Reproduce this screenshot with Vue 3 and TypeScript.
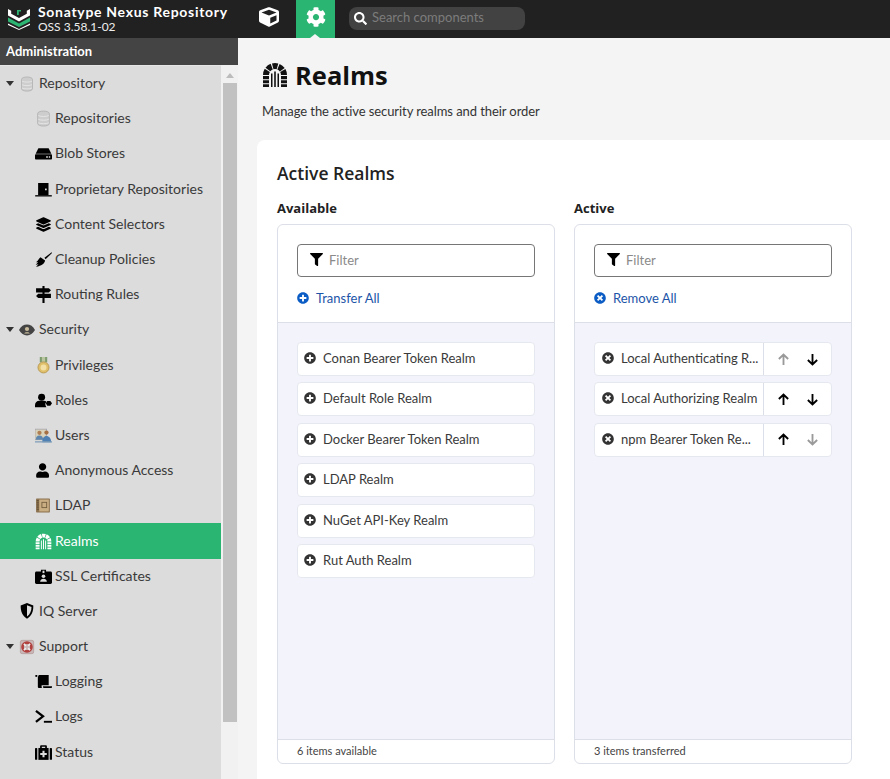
<template>
  <div class="page">
    <header class="topbar">
      <div class="brand">
        <svg class="logo" viewBox="0 0 24 22">
          <path d="M1 1v6.500l11 6 11-6V1l-3.200 1.800v3l-7.800 4.300-7.800-4.300v-3z" fill="#fff" />
          <path d="M1 9.500v4l11 5.500 11-5.500v-4l-11 6z" fill="#2db573" />
          <path d="M1 15.500v1.500l11 5 11-5v-1.500l-11 5.500z" fill="#fff" />
          <path d="M10 2h4v1.500h-2.200V7H10z" fill="#2db573" />
        </svg>
        <div class="brand-text">
          <div class="brand-name">Sonatype Nexus Repository</div>
          <div class="brand-version">OSS 3.58.1-02</div>
        </div>
      </div>
      <button class="mode">
        <svg class="mode-icon" viewBox="0 0 512 512"><path :d="icons.cube" fill="#fff" /></svg>
      </button>
      <button class="mode mode-active">
        <svg class="mode-icon" viewBox="0 0 512 512"><path :d="icons.cog" fill="#fff" /></svg>
        <span class="mode-caret"></span>
      </button>
      <div class="search">
        <svg class="search-icon" viewBox="0 0 512 512"><path :d="icons.search" fill="#fff" /></svg>
        <span class="search-text">Search components</span>
      </div>
    </header>

    <div class="body">
      <aside class="side">
        <div class="side-title">Administration</div>
        <div class="side-main">
          <nav class="tree">
            <div
              v-for="row in rows"
              :key="row.label"
              class="row"
              :class="{ child: row.level === 2, selected: row.label === 'Realms' }"
            >
              <span v-if="row.open" class="twist"></span>
              <span class="row-icon" v-html="row.svg"></span>
              <span class="row-label">{{ row.label }}</span>
            </div>
          </nav>
          <div class="scroll">
            <span class="scroll-up"></span>
            <div class="scroll-thumb"></div>
          </div>
        </div>
      </aside>

      <main class="main">
        <div class="page-head">
          <h1 class="page-title">
            <svg class="page-icon" viewBox="0 0 26 26" v-html="realmSvg"></svg>
            Realms
          </h1>
          <p class="page-sub">Manage the active security realms and their order</p>
        </div>

        <section class="card">
          <h2 class="card-title">Active Realms</h2>
          <div class="columns">
            <div class="column">
              <div class="col-label">Available</div>
              <div class="box">
                <div class="box-top">
                  <div class="filter">
                    <svg class="filter-icon" viewBox="0 0 512 512"><path :d="icons.filter" fill="#000" /></svg>
                    <span>Filter</span>
                  </div>
                  <div class="link">
                    <svg class="link-icon" viewBox="0 0 512 512"><path :d="icons.plus" fill="#0b5cc4" /></svg>
                    Transfer All
                  </div>
                </div>
                <div class="list">
                  <div v-for="item in available" :key="item" class="item">
                    <svg class="item-icon" viewBox="0 0 512 512"><path :d="icons.plus" fill="#333" /></svg>
                    <span class="item-text">{{ item }}</span>
                  </div>
                </div>
                <div class="box-foot">6 items available</div>
              </div>
            </div>

            <div class="column">
              <div class="col-label">Active</div>
              <div class="box">
                <div class="box-top">
                  <div class="filter">
                    <svg class="filter-icon" viewBox="0 0 512 512"><path :d="icons.filter" fill="#000" /></svg>
                    <span>Filter</span>
                  </div>
                  <div class="link">
                    <svg class="link-icon" viewBox="0 0 512 512"><path :d="icons.times" fill="#0b5cc4" /></svg>
                    Remove All
                  </div>
                </div>
                <div class="list">
                  <div v-for="item in active" :key="item.name" class="item item-active">
                    <svg class="item-icon" viewBox="0 0 512 512"><path :d="icons.times" fill="#333" /></svg>
                    <span class="item-text">{{ item.name }}</span>
                    <div class="arrows">
                      <svg class="arrow" :class="{ off: !item.up }" viewBox="0 0 14 14">
                        <path d="M7 13V2M2 6.500 7 1.600l5 4.900" />
                      </svg>
                      <svg class="arrow" :class="{ off: !item.down }" viewBox="0 0 14 14">
                        <path d="M7 1v11M2 7.500l5 4.900 5-4.900" />
                      </svg>
                    </div>
                  </div>
                </div>
                <div class="box-foot">3 items transferred</div>
              </div>
            </div>
          </div>
        </section>
      </main>
    </div>
  </div>
</template>

<script setup lang="ts">
const icons = {
  cube: 'M239.1 6.3l-208 78c-18.7 7-31.1 25-31.1 45v225.1c0 18.2 10.3 34.8 26.5 42.9l208 104c13.5 6.8 29.4 6.8 42.9 0l208-104c16.3-8.1 26.5-24.8 26.5-42.9V129.3c0-20-12.4-37.9-31.1-44.9l-208-78C262 2.2 250 2.2 239.1 6.3zM256 68.4l192 72v1.1l-192 78-192-78v-1.1l192-72zm32 356V275.5l160-65v133.9l-160 80z',
  cog: 'M487.4 315.7l-42.6-24.6c4.3-23.2 4.3-47 0-70.2l42.6-24.6c4.9-2.8 7.1-8.6 5.5-14-11.1-35.6-30-67.8-54.7-94.6-3.8-4.1-10-5.1-14.8-2.3L380.8 110c-17.9-15.4-38.5-27.3-60.8-35.1V25.8c0-5.6-3.9-10.5-9.4-11.7-36.7-8.2-74.3-7.8-109.2 0-5.5 1.2-9.4 6.1-9.4 11.7V75c-22.2 7.9-42.8 19.8-60.8 35.1L88.7 85.5c-4.9-2.8-11-1.9-14.8 2.3-24.7 26.7-43.6 58.9-54.7 94.6-1.7 5.4.6 11.2 5.5 14L67.3 221c-4.3 23.2-4.3 47 0 70.2l-42.6 24.6c-4.9 2.8-7.1 8.6-5.5 14 11.1 35.6 30 67.8 54.7 94.6 3.8 4.1 10 5.1 14.8 2.3l42.6-24.6c17.9 15.4 38.5 27.3 60.8 35.1v49.2c0 5.6 3.9 10.5 9.4 11.7 36.7 8.2 74.3 7.8 109.2 0 5.5-1.2 9.4-6.1 9.4-11.7v-49.2c22.2-7.9 42.8-19.8 60.8-35.1l42.6 24.6c4.9 2.8 11 1.9 14.8-2.3 24.7-26.7 43.6-58.9 54.7-94.6 1.5-5.5-.7-11.3-5.6-14.1zM256 336c-44.1 0-80-35.9-80-80s35.9-80 80-80 80 35.9 80 80-35.9 80-80 80z',
  search: 'M505 442.7L405.3 343c-4.5-4.5-10.6-7-17-7H372c27.6-35.3 44-79.7 44-128C416 93.1 322.9 0 208 0S0 93.1 0 208s93.1 208 208 208c48.3 0 92.7-16.4 128-44v16.3c0 6.4 2.5 12.5 7 17l99.7 99.7c9.4 9.4 24.6 9.4 33.9 0l28.3-28.3c9.4-9.4 9.4-24.6.1-34zM208 336c-70.7 0-128-57.2-128-128 0-70.7 57.2-128 128-128 70.7 0 128 57.2 128 128 0 70.7-57.2 128-128 128z',
  filter: 'M487.976 0H24.028C2.71 0-8.047 25.866 7.058 40.971L192 225.941V432c0 7.831 3.821 15.17 10.237 19.662l80 55.98C298.02 518.69 320 507.493 320 487.98V225.941l184.947-184.97C520.021 25.896 509.338 0 487.976 0z',
  plus: 'M256 8C119 8 8 119 8 256s111 248 248 248 248-111 248-248S393 8 256 8zm144 276c0 6.6-5.4 12-12 12h-92v92c0 6.6-5.4 12-12 12h-56c-6.6 0-12-5.4-12-12v-92h-92c-6.6 0-12-5.4-12-12v-56c0-6.6 5.4-12 12-12h92v-92c0-6.6 5.4-12 12-12h56c6.6 0 12 5.4 12 12v92h92c6.6 0 12 5.4 12 12v56z',
  times: 'M256 8C119 8 8 119 8 256s111 248 248 248 248-111 248-248S393 8 256 8zm121.6 313.1c4.7 4.7 4.7 12.3 0 17L338 377.6c-4.7 4.7-12.3 4.7-17 0L256 312l-65.1 65.6c-4.7 4.7-12.3 4.7-17 0L134.4 338c-4.7-4.7-4.7-12.3 0-17l65.6-65-65.6-65.1c-4.7-4.7-4.7-12.3 0-17l39.6-39.6c4.7-4.7 12.3-4.7 17 0l65 65.7 65.1-65.6c4.7-4.7 12.3-4.7 17 0l39.6 39.6c4.7 4.7 4.7 12.3 0 17L312 256l65.6 65.1z',
  layers: 'M12.41 148.02l232.94 105.67c6.8 3.09 14.49 3.09 21.29 0l232.94-105.67c16.55-7.51 16.55-32.52 0-40.03L266.65 2.31a25.607 25.607 0 0 0-21.29 0L12.41 107.98c-16.55 7.51-16.55 32.53 0 40.04zm487.18 88.28l-58.09-26.33-161.64 73.27c-7.56 3.43-15.59 5.17-23.86 5.17s-16.29-1.74-23.86-5.17L70.51 209.97l-58.1 26.33c-16.55 7.5-16.55 32.5 0 40l232.94 105.59c6.8 3.08 14.49 3.08 21.29 0L499.59 276.3c16.55-7.5 16.55-32.5 0-40zm0 127.8l-57.87-26.23-161.86 73.37c-7.56 3.43-15.59 5.17-23.86 5.17s-16.29-1.74-23.86-5.17L70.29 337.87 12.41 364.1c-16.55 7.5-16.55 32.5 0 40l232.94 105.59c6.8 3.08 14.49 3.08 21.29 0L499.59 404.1c16.55-7.5 16.55-32.5 0-40z',
  user: 'M224 256c70.7 0 128-57.3 128-128S294.7 0 224 0 96 57.3 96 128s57.3 128 128 128zm89.6 32h-16.7c-22.2 10.2-46.9 16-72.9 16s-50.6-5.8-72.9-16h-16.7C60.2 288 0 348.2 0 422.4V464c0 26.5 21.5 48 48 48h352c26.5 0 48-21.5 48-48v-41.6c0-74.2-60.2-134.4-134.4-134.4z',
}

// stone arch with a barred gate, same drawing in the sidebar and the page title
const realmParts = (fill: string) => `
  <path d="M4 13A9 9 0 0 1 22 13" fill="none" stroke="${fill}" stroke-width="6" stroke-dasharray="4.86 1"/>
  <g fill="${fill}">
    <path d="M1 14h6v3.200H1zM19 14h6v3.200h-6zM1 18.200h6v3H1zM19 18.200h6v3h-6zM1 22.200h6V25H1zM19 22.200h6V25h-6z"/>
    <path d="M9 11.500h1.500V25H9zM12.200 9.500h1.600V25h-1.600zM15.500 11.500H17V25h-1.500z"/>
  </g>`

const realmSvg = realmParts('#111')
const wrap = (box: string, inner: string) => `<svg viewBox="${box}" width="100%" height="100%">${inner}</svg>`
const black = (d: string, box = '0 0 512 512') => wrap(box, `<path d="${d}" fill="#000"/>`)

const database = wrap('0 0 16 16', `
  <path d="M2.500 3.400c0-1.500 2.600-2.400 5.500-2.400s5.500.9 5.500 2.400v9.400c0 1.400-2.600 2.300-5.500 2.300s-5.500-.9-5.500-2.300z" fill="#cdcdcd" stroke="#b0b0b0" stroke-width=".8"/>
  <path d="M3 5.200c1.800 1.200 8.200 1.200 10 0M3 8.700c1.800 1.200 8.200 1.200 10 0M3 12c1.800 1.200 8.200 1.200 10 0" fill="none" stroke="#e8e8e8" stroke-width=".8"/>`)

const blob = wrap('0 0 16 14', `
  <path d="M3.200 2h9.600l2.600 5.200H.6z" fill="#000"/>
  <rect x="0" y="7.800" width="16" height="4.800" rx=".8" fill="#000"/>
  <path d="M10.500 9.600h1.600v1.300h-1.600zM13 9.600h1.300v1.300H13z" fill="#ddd"/>`)

const door = wrap('0 0 18 16', `
  <path d="M3.300 1h11v13.200h-11z" fill="#000"/>
  <path d="M.2 14h17.600v1.400H.2z" fill="#000"/>
  <rect x="10.600" y="7" width="1.800" height="1.800" fill="#ddd"/>`)

const broom = wrap('0 0 18 16', `
  <path d="M17.600.4 10 6.200l1.200 1.600 6.800-6.600z" fill="#000"/>
  <path d="M5.800 5.600 10.700 9c-.8 3.400-3.600 5.600-9.600 6.700l2.600-2.800-3 .6 2.600-2.700-2.200.2C3.500 9 4.200 7 5.800 5.600z" fill="#000"/>`)

const signs = wrap('0 0 16 16', `
  <path d="M7 0h2v16H7z" fill="#000"/>
  <path d="M1 2h12l2 2-2 2H1zM15 7.400H3l-2 2 2 2h12z" fill="#000"/>`)

const eye = wrap('0 0 16 14', `
  <path d="M0 7c2-3.600 4.800-5.400 8-5.400S14 3.400 16 7c-2 3.600-4.800 5.400-8 5.400S2 10.600 0 7z" fill="#444"/>
  <circle cx="8" cy="6" r="2.100" fill="#c9bd9d"/>
  <path d="M5.200 10.600c.6-1.700 5-1.700 5.600 0z" fill="#c9bd9d"/>`)

const medal = wrap('-2 0 16 16', `
  <path d="M2.500 0h7v5h-7z" fill="#7e9c6e"/>
  <path d="M4.500 0h3v5h-3z" fill="#b9c6a0"/>
  <circle cx="6" cy="9.800" r="5.200" fill="#e0bf6a" stroke="#b3934c" stroke-width=".8"/>
  <circle cx="6" cy="9.800" r="2.800" fill="#f2e0a6"/>`)

const roles = wrap('0 0 18 15', `
  <circle cx="7" cy="4" r="3.700" fill="#000"/>
  <path d="M0 14.600v-2.200c0-2.800 2.200-4.600 4.400-4.600h5c1.200 0 2.200.4 3 1.200l-1.400 1.300v2l1 2.300z" fill="#000"/>
  <path d="M13 8h3.200l1.800 2.500-1.800 2.600H13l-1.600-2.600z" fill="#000"/>`)

const users = wrap('0 -1 16 16', `
  <rect x="0" y="1" width="11" height="10" fill="#d8d2bb" stroke="#99a" stroke-width=".6"/>
  <circle cx="4.200" cy="4.500" r="2" fill="#b07f53"/>
  <path d="M.8 11c0-3 1.300-4 3.400-4s3.400 1 3.400 4z" fill="#5f86ad"/>
  <circle cx="10.800" cy="4.200" r="2" fill="#a66f44"/>
  <path d="M6.800 13.400c0-4 1.700-6 4-6s4.400 2 4.400 6z" fill="#4f80b3"/>
  <path d="M0 12.400h16v1.200H0z" fill="#7f9db8"/>`)

const book = wrap('-1 -1 16 16', `
  <rect x="0" y=".4" width="13" height="13.200" rx=".6" fill="#8c7350"/>
  <rect x="3" y="1.400" width="9" height="11.200" fill="#c9ae84"/>
  <path d="M.6 2.500h2M.6 4.500h2M.6 6.500h2M.6 8.500h2M.6 10.500h2" stroke="#4d3e28" stroke-width=".7"/>
  <rect x="5.500" y="4" width="4.500" height="5" fill="none" stroke="#6f5a3b" stroke-width=".8"/>`)

const badge = wrap('0 0 16 14', `
  <path d="M1.400 2.400H5.600V.6h4.800v1.800h4.200c.8 0 1.400.6 1.400 1.400v8.800c0 .8-.6 1.400-1.400 1.400H1.400C.6 14 0 13.400 0 12.600V3.800c0-.8.6-1.400 1.400-1.400z" fill="#000"/>
  <path d="M7.100 1.500h1.800v2.300H7.100z" fill="#ddd"/>
  <circle cx="8" cy="6.800" r="1.700" fill="#ddd"/>
  <path d="M4.800 12c.2-2 1.400-2.900 3.200-2.900s3 .9 3.200 2.900z" fill="#ddd"/>`)

const shield = wrap('0 0 14 16', `
  <path d="M7 0 .7 2.600c-.2 5.600 1.600 10.500 6.300 13.200 4.700-2.700 6.500-7.600 6.300-13.200z" fill="#000"/>
  <path d="M7 2.300v11.200c3-2 4.400-5.400 4.500-9.400z" fill="#ddd"/>`)

const lifebuoy = wrap('-1 -1 18 18', `
  <rect x=".5" y=".5" width="15" height="15" rx="2" fill="#c9b6b6" stroke="#a88" stroke-width=".6"/>
  <circle cx="8" cy="8" r="5" fill="none" stroke="#b0413f" stroke-width="3"/>
  <path d="M4.600 4.600l2 2M11.400 4.600l-2 2M4.600 11.400l2-2M11.400 11.400l-2-2" stroke="#eee" stroke-width="2"/>`)

const scroll = wrap('0 0 18 15', `
  <path d="M4 .5h10.500v11H7v1.800c0 .6.600 1.200 1.200 1.200H4.400C3.600 14.500 3 13.800 3 13V3z" fill="#000"/>
  <path d="M.4.600h2v2h-2z" fill="#000"/>
  <path d="M8.400 12.600H18v.8c0 .6-.5 1.100-1.100 1.100H9c-.4-.5-.6-1.200-.6-1.900z" fill="#000"/>`)

const terminal = wrap('0 0 18 14', `
  <path d="M1 1 8.500 6.800 1 12.600" fill="none" stroke="#000" stroke-width="2.400"/>
  <path d="M9.400 11.600H18v2H9.400z" fill="#000"/>`)

const medkit = wrap('0 0 15 14', `
  <path d="M4.500 3V1.500C4.500.9 5 .5 5.500.5h4c.6 0 1 .4 1 1V3H9V2H6v1z" fill="#000"/>
  <rect x="0" y="3" width="2" height="10.500" rx=".6" fill="#000"/>
  <rect x="13" y="3" width="2" height="10.500" rx=".6" fill="#000"/>
  <rect x="3" y="3" width="9" height="10.500" fill="#000"/>
  <path d="M6.600 5.400h1.800v2h2v1.800h-2v2H6.600v-2h-2V7.400h2z" fill="#ddd"/>`)

interface Row {
  label: string
  level: 1 | 2
  svg: string
  open?: boolean
}

const rows: Row[] = [
  { label: 'Repository', level: 1, svg: database, open: true },
  { label: 'Repositories', level: 2, svg: database },
  { label: 'Blob Stores', level: 2, svg: blob },
  { label: 'Proprietary Repositories', level: 2, svg: door },
  { label: 'Content Selectors', level: 2, svg: black(icons.layers, '-40 -40 592 592') },
  { label: 'Cleanup Policies', level: 2, svg: broom },
  { label: 'Routing Rules', level: 2, svg: signs },
  { label: 'Security', level: 1, svg: eye, open: true },
  { label: 'Privileges', level: 2, svg: medal },
  { label: 'Roles', level: 2, svg: roles },
  { label: 'Users', level: 2, svg: users },
  { label: 'Anonymous Access', level: 2, svg: black(icons.user, '-40 -40 592 592') },
  { label: 'LDAP', level: 2, svg: book },
  { label: 'Realms', level: 2, svg: wrap('0 0 26 26', realmParts('#fff')) },
  { label: 'SSL Certificates', level: 2, svg: badge },
  { label: 'IQ Server', level: 1, svg: shield },
  { label: 'Support', level: 1, svg: lifebuoy, open: true },
  { label: 'Logging', level: 2, svg: scroll },
  { label: 'Logs', level: 2, svg: terminal },
  { label: 'Status', level: 2, svg: medkit },
]

const available = [
  'Conan Bearer Token Realm',
  'Default Role Realm',
  'Docker Bearer Token Realm',
  'LDAP Realm',
  'NuGet API-Key Realm',
  'Rut Auth Realm',
]

const active = [
  { name: 'Local Authenticating R...', up: false, down: true },
  { name: 'Local Authorizing Realm', up: true, down: true },
  { name: 'npm Bearer Token Re...', up: true, down: false },
]
</script>

<style>
html,
body {
  margin: 0;
  overflow: hidden;
}
</style>

<style scoped>
* {
  box-sizing: border-box;
}

.page {
  width: 890px;
  height: 779px;
  overflow: hidden;
  display: flex;
  flex-direction: column;
  font-family: Lato, "Noto Sans", sans-serif;
  font-size: 14px;
  color: #333;
  background: #f4f4f4;
}

.topbar {
  height: 38px;
  flex: none;
  display: flex;
  align-items: center;
  background: #212121;
}

.brand {
  width: 250px;
  flex: none;
  display: flex;
  align-items: center;
  padding-left: 7px;
  gap: 7px;
  color: #fff;
}

.logo {
  width: 24px;
  height: 22px;
}

.brand-name {
  font-size: 14px;
  font-weight: 700;
  line-height: 14px;
  margin-bottom: 1px;
  letter-spacing: 0.7px;
}

.brand-version {
  font-size: 12px;
  line-height: 13px;
  color: #eee;
}

.mode {
  width: 38px;
  height: 38px;
  padding: 0 0 4px;
  border: none;
  background: none;
  display: flex;
  align-items: center;
  justify-content: center;
  position: relative;
}

.mode-active {
  width: 39px;
  margin-left: 8px;
  background: #2bb573;
}

.mode-icon {
  width: 20px;
  height: 20px;
}

.mode-caret {
  position: absolute;
  left: 14px;
  bottom: 0;
  border: 5px solid transparent;
  border-top: 0;
  border-bottom: 4px solid #f4f4f4;
}

.search {
  width: 176px;
  height: 23px;
  margin: 0 0 2px 14px;
  border-radius: 8px;
  background: #424242;
  display: flex;
  align-items: center;
  padding-left: 5px;
  gap: 5px;
}

.search-icon {
  width: 13px;
  height: 13px;
}

.search-text {
  color: #7c7c7c;
  font-size: 13px;
  margin-bottom: 2px;
}

.body {
  flex: 1;
  display: flex;
  min-height: 0;
}

.side {
  width: 238px;
  flex: none;
  display: flex;
  flex-direction: column;
  background: #f1f1f1;
}

.side-title {
  height: 27px;
  flex: none;
  background: #444;
  color: #fff;
  font-size: 13px;
  font-weight: 700;
  line-height: 27px;
  padding-left: 6px;
}

.side-main {
  flex: 1;
  display: flex;
  min-height: 0;
}

.tree {
  width: 221px;
  background: #dcdcdc;
  flex: none;
  height: 714px;
  border-top: 1px solid #e6e6e6;
}

.row {
  height: 35.2px;
  display: flex;
  align-items: center;
  padding-left: 19px;
  position: relative;
  color: #3a3a3a;
}

.row.child {
  padding-left: 35px;
}

.row.selected {
  background: #2bb573;
  color: #fff;
}

.row-label {
  margin-bottom: 2px;
}

.twist {
  position: absolute;
  left: 6px;
  top: 15px;
  border: 4px solid transparent;
  border-top: 5px solid #333;
  border-bottom: 0;
}

.row-icon {
  width: 16px;
  height: 16px;
  margin-right: 4px;
  flex: none;
  display: flex;
  align-items: center;
  justify-content: center;
}

.row.child .row-icon {
  width: 17px;
  height: 17px;
  margin-right: 3px;
}

.scroll {
  flex: 1;
  padding-left: 2px;
  display: flex;
  flex-direction: column;
}

.scroll-up {
  width: 0;
  margin: 8px 0 0 3px;
  border: 4px solid transparent;
  border-top: 0;
  border-bottom: 5px solid #bcbcbc;
}

.scroll-thumb {
  margin-top: 5px;
  width: 14px;
  height: 639px;
  background: #c1c1c1;
}

.main {
  flex: 1;
  min-width: 0;
}

.page-head {
  height: 102px;
  padding: 21px 0 0 24px;
}

.page-title {
  margin: 0;
  display: flex;
  align-items: center;
  gap: 7px;
  font-family: "Open Sans", sans-serif;
  font-size: 25.5px;
  font-weight: 700;
  line-height: 32px;
  color: #111;
}

.page-icon {
  width: 26px;
  height: 26px;
}

.page-sub {
  margin: 10px 0 0;
  font-size: 13px;
  line-height: 20px;
  color: #333;
  letter-spacing: -0.08px;
}

.card {
  margin-left: 19px;
  height: 700px;
  background: #fff;
  border-radius: 8px 0 0 0;
  padding: 20px;
}

.card-title {
  margin: 0;
  font-family: "Open Sans", sans-serif;
  font-size: 17.5px;
  font-weight: 600;
  line-height: 26px;
  color: #222;
}

.columns {
  display: flex;
  gap: 19px;
  margin-top: 13px;
}

.column {
  width: 278px;
}

.col-label {
  font-family: "Open Sans", sans-serif;
  font-size: 13px;
  font-weight: 700;
  line-height: 18px;
  color: #222;
  margin-bottom: 7px;
}

.box {
  height: 540px;
  border: 1px solid #dcdee8;
  border-radius: 6px;
  display: flex;
  flex-direction: column;
  overflow: hidden;
}

.box-top {
  height: 98px;
  flex: none;
  padding: 19px 19px 0;
  border-bottom: 1px solid #dcdee8;
}

.filter {
  height: 33px;
  border: 1px solid #767676;
  border-radius: 4px;
  display: flex;
  align-items: center;
  gap: 6px;
  padding: 0 0 2px 12px;
  font-size: 13px;
  color: #8a8a8a;
}

.filter-icon {
  width: 13px;
  height: 13px;
}

.link {
  display: flex;
  align-items: center;
  gap: 7px;
  margin-top: 12px;
  font-size: 13px;
  line-height: 18px;
  color: #1c55a8;
}

.link-icon {
  width: 12px;
  height: 12px;
}

.list {
  flex: 1;
  background: #f3f4fb;
  padding: 19px 19px 0;
  display: flex;
  flex-direction: column;
  gap: 6.4px;
}

.item {
  height: 34px;
  background: #fff;
  border: 1px solid #e6e8f0;
  border-radius: 4px;
  display: flex;
  align-items: center;
  padding-left: 6px;
  gap: 7px;
  font-size: 13px;
  color: #3a3a3a;
}

.item-active {
  padding-left: 7px;
}

.item-icon {
  width: 12px;
  height: 12px;
  flex: none;
  margin-bottom: 2px;
}

.item-text {
  white-space: nowrap;
  min-width: 0;
  flex: 1;
  margin-bottom: 2px;
}

.arrows {
  width: 68px;
  height: 100%;
  flex: none;
  border-left: 1px solid #dcdee8;
  display: flex;
  align-items: center;
  justify-content: center;
  gap: 16px;
}

.arrow {
  width: 13px;
  height: 13px;
  fill: none;
  stroke: #000;
  stroke-width: 2;
}

.arrow.off {
  stroke: #9a9a9a;
}

.box-foot {
  height: 24px;
  flex: none;
  border-top: 1px solid #dcdee8;
  padding-left: 19px;
  font-size: 11px;
  line-height: 21px;
  color: #444;
}
</style>
